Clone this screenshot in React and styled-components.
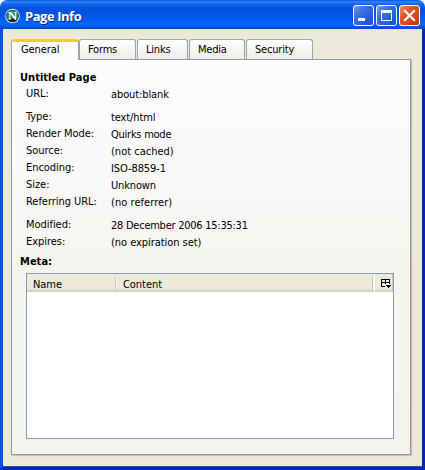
import React from 'react';
import styled, { createGlobalStyle } from 'styled-components';

const Global = createGlobalStyle`
  * { box-sizing: border-box; }
  body { margin: 0; background: #fff; overflow: hidden; }
`;

const Window = styled.div`
  width: 425px;
  height: 470px;
  display: flex;
  flex-direction: column;
  border-radius: 7px 7px 0 0;
  overflow: hidden;
  background: #ece9d8;
  font: 11px/17px 'DejaVu Sans Condensed', 'DejaVu Sans', sans-serif;
  font-stretch: condensed;
  letter-spacing: -0.2px;
  color: #000;
  cursor: default;
`;

const TitleBar = styled.header`
  height: 29px;
  flex: none;
  display: flex;
  align-items: center;
  padding: 2px 5px 0 5px;
  background: linear-gradient(180deg, #0a51d8 0, #2f87fb 2px, #0c67ef 4px, #0053dd 8px, #0055e6 15px, #0462fa 22px, #0464fb 25px, #0050dc 28px, #003dc7 29px);
`;

const Title = styled.h1`
  flex: 1;
  margin: 0 0 0 5px;
  font: bold 13px/20px 'Open Sans', sans-serif;
  letter-spacing: -0.45px;
  color: #fff;
  text-shadow: 1px 1px 0 #0a2a7c;
`;

const Controls = styled.div`
  display: flex;
  gap: 2px;
`;

const ControlButton = styled.button`
  width: 21px;
  height: 21px;
  padding: 0;
  display: flex;
  border: 1px solid #fff;
  border-radius: 3px;
  background: ${(p) =>
    p.$danger
      ? 'linear-gradient(135deg, #ee9075 0, #e2522c 35%, #d9441c 70%, #b93410 100%)'
      : 'linear-gradient(135deg, #6f9cf4 0, #3a70e8 35%, #245edb 70%, #1c4cc8 100%)'};
`;

const Frame = styled.main`
  flex: 1;
  display: flex;
  flex-direction: column;
  padding: 10px 11px 12px 8px;
  border: solid;
  border-width: 0 3px 3px;
  border-color: #0a4fe8 #0528b0 #0528b0 #0a4fe8;
  box-shadow: inset 0 -1px #1a50d0;
`;

const TabList = styled.nav`
  display: flex;
  align-items: flex-start;
  height: 20px;
`;

const Tab = styled.button`
  width: ${(p) => p.$width}px;
  height: 20px;
  margin: 0 1px 0 0;
  padding: 0 0 0 8px;
  font: inherit;
  line-height: 18px;
  letter-spacing: inherit;
  text-align: left;
  color: #000;
  border: 1px solid #91a7b4;
  border-bottom: 0;
  border-radius: 3px 3px 0 0;
  background: linear-gradient(#fff, #f5f4ee 60%, #ecebe5);
`;

const ActiveTab = styled(Tab)`
  height: 21px;
  margin-right: 0;
  padding: 0 0 4px 9px;
  line-height: 13px;
  letter-spacing: -0.1px;
  border-top: 3px solid #ffc73c;
  background: #fcfcfe;
  position: relative;
`;

const Panel = styled.section`
  flex: 1;
  display: flex;
  flex-direction: column;
  padding: 9px 16px 15px 14px;
  border: 1px solid #919b9c;
  box-shadow: 1px 1px 1px #c5c2b2;
  background: linear-gradient(#fcfcfe 0, #fbfbfc 15%, #f6f5f1 50%, #f4f3ee 100%);
`;

const Heading = styled.h2`
  margin: 0 0 0 -6px;
  font-size: 11px;
  line-height: 17px;
  letter-spacing: 0.03px;
`;

const Groups = styled.div`
  margin-top: -1px;
`;

const Fields = styled.dl`
  margin: 0 0 ${(p) => p.$gap}px;
  display: grid;
  grid-template-columns: 86px 1fr;
  grid-auto-rows: 17px;
`;

const Label = styled.dt`
  letter-spacing: -0.04px;
`;

const Value = styled.dd`
  margin: 0 0 0 -1px;
  padding-top: 1px;
  letter-spacing: ${(p) => p.$tracking ?? -0.1}px;
`;

const Table = styled.div`
  flex: 1;
  display: flex;
  flex-direction: column;
  margin-top: 3px;
  border: 1px solid #7f9db9;
  background: #fff;
`;

const HeaderRow = styled.div`
  display: flex;
  height: 18px;
  background: linear-gradient(#ebeadb 0, #ebeadb 15px, #e2decd 15px, #d6d2c2 17px, #cbc7b8 18px);
`;

const HeaderCell = styled.div`
  ${(p) => (p.$width ? `width: ${p.$width}px;` : 'flex: 1;')}
  display: flex;
  align-items: center;
  justify-content: space-between;
  padding: 2px 0 0 6px;
  letter-spacing: -0.05px;

  &::after {
    content: '';
    width: 2px;
    height: 12px;
    margin-top: -3px;
    background: linear-gradient(90deg, #c7c5b2 50%, #fff 50%);
  }
`;

const Picker = styled.div`
  width: 19px;
  padding: 5px 0 0 6px;
  border-left: 1px solid #fff;
  border-right: 1px solid #cbc7b8;
  line-height: 0;
`;

function Logo() {
  return (
    <svg width="15" height="16" viewBox="0 0 15 16">
      <circle cx="7.5" cy="8" r="7.3" fill="#dce7df" />
      <circle cx="7.5" cy="8" r="6.3" fill="#132a32" />
      <circle cx="7.5" cy="7.7" r="5.7" fill="#27858b" />
      <path d="M3 11.2a5.6 5.6 0 0 0 9 0Q7.5 9.7 3 11.2Z" fill="#111f25" />
      <path d="M3.2 3.9h3l4 5.2V4.8H9.1v-.9h3v.9h-.9v7H9.9L5.3 5.9v4.7h1.1v.9h-3v-.9h.9V4.8H3.2Z" fill="#fff" />
    </svg>
  );
}

function ControlIcon({ kind }) {
  return (
    <svg width="19" height="19" viewBox="0 0 19 19" shapeRendering={kind === 'close' ? 'auto' : 'crispEdges'}>
      {kind === 'minimize' && <path d="M4 12h7v3H4z" fill="#fff" />}
      {kind === 'maximize' && <path d="M4 4h11v11H4zM5 7v7h9V7z" fill="#fff" fillRule="evenodd" />}
      {kind === 'close' && <path d="M5 5l9 9M14 5l-9 9" stroke="#fff" strokeWidth="2.2" strokeLinecap="square" />}
    </svg>
  );
}

const GROUPS = [
  { gap: 6, rows: [['URL:', 'about:blank']] },
  {
    gap: 6,
    rows: [
      ['Type:', 'text/html'],
      ['Render Mode:', 'Quirks mode', -0.25],
      ['Source:', '(not cached)', 0],
      ['Encoding:', 'ISO-8859-1'],
      ['Size:', 'Unknown', -0.15],
      ['Referring URL:', '(no referrer)', 0.05],
    ],
  },
  {
    gap: 3,
    rows: [
      ['Modified:', '28 December 2006 15:35:31', -0.25],
      ['Expires:', '(no expiration set)', -0.05],
    ],
  },
];

export default function App() {
  return (
    <>
      <Global />
      <Window>
        <TitleBar>
          <Logo />
          <Title>Page Info</Title>
          <Controls>
            <ControlButton aria-label="Minimize"><ControlIcon kind="minimize" /></ControlButton>
            <ControlButton aria-label="Maximize"><ControlIcon kind="maximize" /></ControlButton>
            <ControlButton $danger aria-label="Close"><ControlIcon kind="close" /></ControlButton>
          </Controls>
        </TitleBar>
        <Frame>
          <TabList>
            <ActiveTab $width={68}>General</ActiveTab>
            <Tab $width={57}>Forms</Tab>
            <Tab $width={51}>Links</Tab>
            <Tab $width={56}>Media</Tab>
            <Tab $width={67}>Security</Tab>
          </TabList>
          <Panel>
            <Heading>Untitled Page</Heading>
            <Groups>
              {GROUPS.map((group) => (
                <Fields key={group.rows[0][0]} $gap={group.gap}>
                  {group.rows.map(([label, value, tracking]) => (
                    <React.Fragment key={label}>
                      <Label>{label}</Label>
                      <Value $tracking={tracking}>{value}</Value>
                    </React.Fragment>
                  ))}
                </Fields>
              ))}
            </Groups>
            <Heading>Meta:</Heading>
            <Table>
              <HeaderRow>
                <HeaderCell $width={90}>Name</HeaderCell>
                <HeaderCell>Content</HeaderCell>
                <Picker>
                  <svg width="11" height="9" viewBox="0 0 11 9" shapeRendering="crispEdges">
                    <path d="M0 0h9v5H8V4H5v1H4V4H1v3h3v1H0zM1 1v2h3V1zM5 1v2h3V1z" fill="#000" fillRule="evenodd" />
                    <path d="M5 6h5v1H9v1H8v1H7V8H6V7H5z" fill="#000" />
                  </svg>
                </Picker>
              </HeaderRow>
            </Table>
          </Panel>
        </Frame>
      </Window>
    </>
  );
}
